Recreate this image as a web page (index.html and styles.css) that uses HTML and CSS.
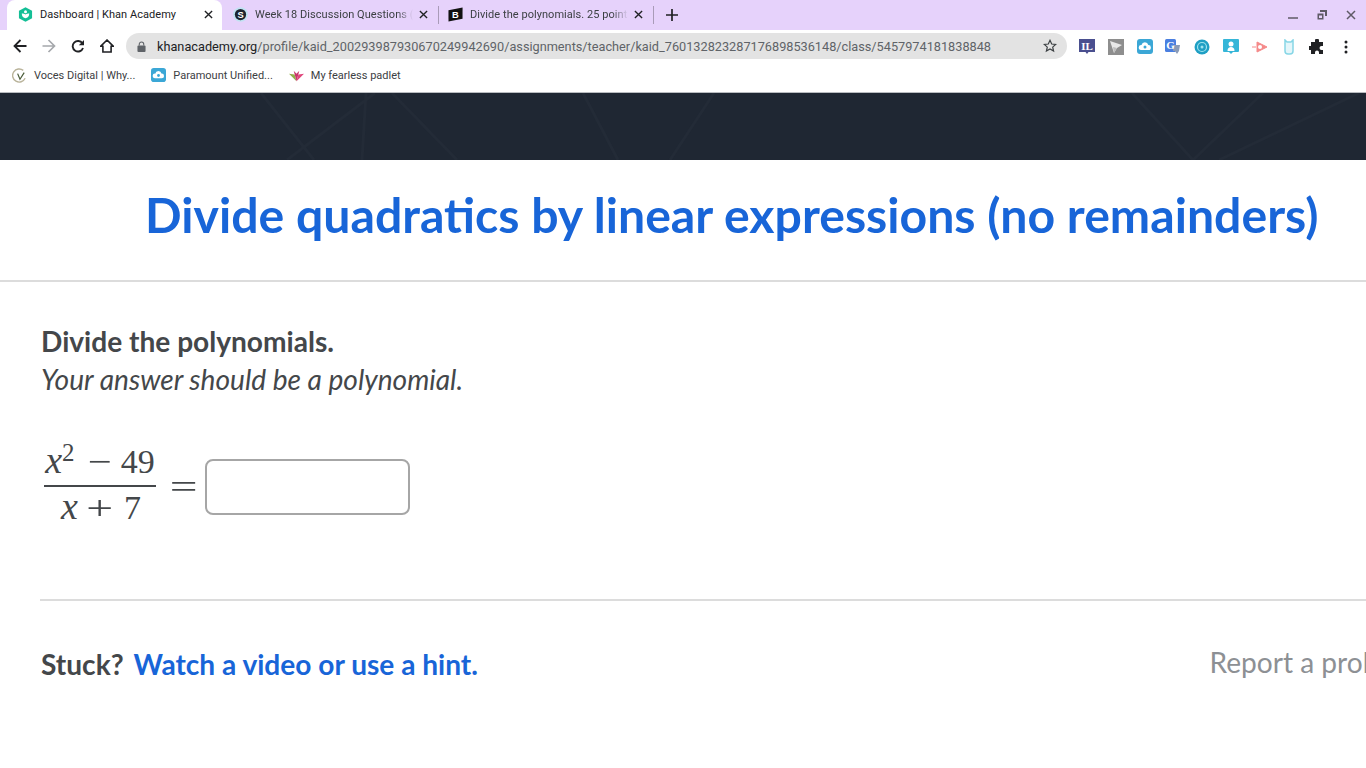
FILE: index.html
```html
<!DOCTYPE html>
<html lang="en">
<head>
    <meta charset="UTF-8">
    <title>Dashboard | Khan Academy</title>
    <link rel="stylesheet" href="styles.css">
</head>
<body>

    <!-- Browser chrome -->
    <div class="tab-strip">
        <div class="tab active">
            <svg class="favicon" viewBox="0 0 16 16"><path d="M8 .2l7 3.800v8l-7 3.800L1 12V4z" fill="#14bf96"/><path d="M4 7c0 3 2 5 4 5s4-2 4-5c-1.500 0-3 .3-4 1-1-.7-2.500-1-4-1z" fill="#fff"/><circle cx="8" cy="5" r="1.600" fill="#fff"/></svg>
            <span class="tab-title">Dashboard | Khan Academy</span>
            <svg class="tab-close" viewBox="0 0 10 10"><path d="M1 1l8 8M9 1l-8 8"/></svg>
        </div>
        <div class="tab">
            <svg class="favicon" viewBox="0 0 16 16"><circle cx="8" cy="8" r="7.800" fill="#bfe3f2"/><circle cx="8" cy="8" r="6" fill="#1d2430"/><text x="8" y="11.500" class="fav-letter">S</text></svg>
            <span class="tab-title fade">Week 18 Discussion Questions (Q</span>
            <svg class="tab-close" viewBox="0 0 10 10"><path d="M1 1l8 8M9 1l-8 8"/></svg>
        </div>
        <div class="tab-sep"></div>
        <div class="tab third">
            <svg class="favicon" viewBox="0 0 16 16"><path d="M.5 3.500l15-3v12l-15 3z" fill="#111"/><text x="8" y="11.500" class="fav-letter">B</text></svg>
            <span class="tab-title fade">Divide the polynomials. 25 points</span>
            <svg class="tab-close" viewBox="0 0 10 10"><path d="M1 1l8 8M9 1l-8 8"/></svg>
        </div>
        <div class="tab-sep"></div>
        <svg class="new-tab" viewBox="0 0 12 12"><path d="M6 0v12M0 6h12"/></svg>
        <div class="window-controls">
            <svg viewBox="0 0 10 10"><path d="M0 8h10" stroke="#5f5a66" stroke-width="1.500"/></svg>
            <svg viewBox="0 0 10 10"><path d="M3 0h7v6H8V2H3z" fill="#5f5a66"/><rect x="0.500" y="3.500" width="6" height="6" fill="#5f5a66"/><rect x="2" y="5.500" width="3" height="2.500" fill="#e6d2fb"/></svg>
            <svg viewBox="0 0 10 10"><path d="M1 1l8 8M9 1l-8 8" stroke="#5f5a66" stroke-width="1.500"/></svg>
        </div>
    </div>

    <div class="toolbar">
        <svg class="nav-icon" viewBox="0 0 14 14"><path d="M13.500 7H1.500M7.500 1L1.500 7l6 6" fill="none" stroke="#202124" stroke-width="1.800"/></svg>
        <svg class="nav-icon" viewBox="0 0 14 14"><path d="M.5 7h12M6.500 1l6 6-6 6" fill="none" stroke="#a5a8ac" stroke-width="1.700"/></svg>
        <svg class="nav-icon" viewBox="0 0 14 14"><path d="M12 9a5.300 5.300 0 1 1-.6-4.700" fill="none" stroke="#202124" stroke-width="1.900"/><path d="M13 1v5.200H7.800z" fill="#202124"/></svg>
        <svg class="nav-icon" viewBox="0 0 14 14"><path d="M7 1L.8 7.200h2.100V13h8.200V7.200h2.100z" fill="none" stroke="#202124" stroke-width="1.600"/></svg>
        <div class="omnibox">
            <svg class="lock" viewBox="0 0 10 12"><rect x="0.500" y="5" width="9" height="7" rx="1" fill="#5f6368"/><path d="M2.500 5V3.500a2.500 2.500 0 0 1 5 0V5" fill="none" stroke="#5f6368" stroke-width="1.200"/></svg>
            <div class="url"><span class="host">khanacademy.org</span>/profile/kaid_200293987930670249942690/assignments/teacher/kaid_760132823287176898536148/class/5457974181838848</div>
            <svg class="star" viewBox="0 0 14 14"><path d="M7 1.300l1.700 3.700 4 .4-3 2.700.9 4L7 10l-3.600 2.100.9-4-3-2.700 4-.4z" fill="none" stroke="#3c4043" stroke-width="1.200"/></svg>
        </div>
        <div class="extensions">
            <svg viewBox="0 0 16 16"><path d="M0 0h16v13H9.500L8 15l-1.500-2H0z" fill="#4a4f8f"/><text x="8" y="11" class="ext-letter">IL</text></svg>
            <svg viewBox="0 0 16 16"><rect width="16" height="16" fill="#8e8e8e"/><path d="M2 2l12 4-5 3-3 5z" fill="#e8e8e8"/><path d="M6 14l3-5-4-1z" fill="#bdbdbd"/></svg>
            <svg viewBox="0 0 16 16"><rect width="16" height="15" rx="3" fill="#3ba7d6"/><path d="M4 11a2.500 2.500 0 0 1 .5-5 3.500 3.500 0 0 1 6.800 0 2.500 2.500 0 0 1 .2 5z" fill="#fff"/><circle cx="8" cy="8" r="1.500" fill="#3ba7d6"/></svg>
            <svg viewBox="0 0 16 16"><rect width="11" height="13" rx="1.500" fill="#4a7fe0"/><path d="M8 6h7l-1 6-2 3-2-3H8z" fill="#8a9bb8"/><text x="5.500" y="9.500" class="ext-letter">G</text></svg>
            <svg viewBox="0 0 16 16"><circle cx="8" cy="8" r="7.500" fill="#1f9fc4"/><circle cx="8" cy="8" r="4.500" fill="none" stroke="#9fe3ee" stroke-width="1.200"/><circle cx="8" cy="8" r="1.500" fill="#9fe3ee"/></svg>
            <svg viewBox="0 0 16 16"><path d="M1 0h14a1 1 0 0 1 1 1v11a1 1 0 0 1-1 1h-5l-2 2-2-2H1a1 1 0 0 1-1-1V1a1 1 0 0 1 1-1z" fill="#35b6d8"/><circle cx="8" cy="5" r="2.500" fill="#fff"/><path d="M4.500 12c0-3 1.500-4 3.500-4s3.500 1 3.500 4z" fill="#fff"/></svg>
            <svg viewBox="0 0 16 16"><path d="M0 8h4M5 3l10 5-10 5z" fill="#f58a8a" stroke="#f58a8a"/><circle cx="8" cy="8" r="2" fill="#fff"/></svg>
            <svg viewBox="0 0 16 16"><path d="M4 1l2 2h4l2-2v11a3 3 0 0 1-3 3H7a3 3 0 0 1-3-3z" fill="#e4f6fa" stroke="#86d6e6" stroke-width="1.500"/></svg>
            <svg viewBox="0 0 16 16"><path d="M6 1.500a2 2 0 0 1 4 0V3h4v4h-1.500a2 2 0 0 0 0 4H14v4h-4v-1.500a2 2 0 0 0-4 0V15H2v-4H.5a2 2 0 0 1 0-4H2V3h4z" fill="#202124"/></svg>
            <svg viewBox="0 0 16 16"><circle cx="8" cy="3" r="1.500" fill="#202124"/><circle cx="8" cy="8" r="1.500" fill="#202124"/><circle cx="8" cy="13" r="1.500" fill="#202124"/></svg>
        </div>
    </div>

    <div class="bookmarks">
        <div class="bookmark">
            <svg viewBox="0 0 16 16"><path d="M12 2.500A7 7 0 1 0 14 11" fill="none" stroke="#b9b39a" stroke-width="1.500"/><path d="M6 6l2.500 6L13 5" fill="none" stroke="#4b5d3a" stroke-width="1.300"/></svg>
            <span>Voces Digital | Why...</span>
        </div>
        <div class="bookmark">
            <svg viewBox="0 0 16 16"><rect width="16" height="15" rx="3" fill="#3ba7d6"/><path d="M4 11a2.500 2.500 0 0 1 .5-5 3.500 3.500 0 0 1 6.800 0 2.500 2.500 0 0 1 .2 5z" fill="#fff"/><circle cx="8" cy="8" r="1.500" fill="#3ba7d6"/></svg>
            <span>Paramount Unified...</span>
        </div>
        <div class="bookmark">
            <svg viewBox="0 0 16 16"><path d="M8 14L0 6l6 1z" fill="#8fb04a"/><path d="M8 14l8-8-6 1z" fill="#e0457b"/><path d="M8 14L5 3l3 3 3-3z" fill="#c9366b"/></svg>
            <span>My fearless padlet</span>
        </div>
    </div>

    <!-- Page -->
    <div class="page">
        <div class="hero">
            <svg class="hero-lines" viewBox="0 0 1366 67" preserveAspectRatio="none">
                <path d="M261 0l53 67M375 0l-88 67M392 0l65 67M366 0l-4 67M583 0l35 67M714 0l-44 67M1132 0l61 67M1263 0l-70 67M1359 0l-140 67"/>
            </svg>
        </div>
        <div class="title-bar">
            <h1 class="exercise-title">Divide quadratics by linear expressions (no remainders)</h1>
        </div>
        <div class="problem">
            <p class="prompt">Divide the polynomials.</p>
            <p class="hint-line">Your answer should be a polynomial.</p>
            <div class="equation">
                <div class="fraction">
                    <div class="numerator"><i>x</i><sup>2</sup><span class="op minus">−</span>49</div>
                    <div class="denominator"><i>x</i><span class="op plus">+</span>7</div>
                </div>
                <span class="equals">=</span>
                <input class="answer-box" type="text">
            </div>
        </div>
        <div class="footer-row">
            <span class="stuck">Stuck?</span>
            <a class="hint-link">Watch a video or use a hint.</a>
            <a class="report-link">Report a problem</a>
        </div>
    </div>

</body>
</html>
```

FILE: styles.css
```css
html, body {
    margin: 0;
    padding: 0;
    height: 768px;
    overflow: hidden;
    background: #fff;
}
body {
    width: 1366px;
    font-family: Lato, sans-serif;
}

/* --- Tab strip --- */
.tab-strip {
    height: 30px;
    background: #e6d2fb;
    display: flex;
    align-items: center;
    font-family: Roboto, sans-serif;
    font-size: 11px;
    color: #3c4043;
}
.tab {
    width: 216px;
    height: 30px;
    box-sizing: border-box;
    padding: 0 0 2px 11px;
    display: flex;
    align-items: center;
    flex-shrink: 0;
}
.tab.third { width: 214px; padding-left: 9px; }
.tab.active {
    width: 215px;
    margin-left: 7px;
    background: #fff;
    border-radius: 8px 8px 0 0;
    color: #202124;
}
.tab.active .tab-close { margin-right: 9px; }
.favicon { width: 15px; height: 15px; flex-shrink: 0; }
.fav-letter {
    font: bold 10px "Liberation Sans", sans-serif;
    fill: #fff;
    text-anchor: middle;
}
.tab-title {
    margin-left: 7px;
    min-width: 0;
    white-space: nowrap;
    overflow: hidden;
    flex-grow: 1;
    flex-basis: 0;
    letter-spacing: 0.05px;
}
.fade {
    -webkit-mask-image: linear-gradient(to right, #000 90%, transparent);
    mask-image: linear-gradient(to right, #000 90%, transparent);
}
.tab-close {
    width: 9px;
    height: 9px;
    margin: 0 10px 0 6px;
    flex-shrink: 0;
    stroke: #202124;
    stroke-width: 1.500;
    fill: none;
}
.tab-sep {
    width: 1px;
    height: 18px;
    background: #a99bb8;
    flex-shrink: 0;
}
.new-tab {
    width: 12px;
    height: 12px;
    margin-left: 12px;
    stroke: #202124;
    stroke-width: 1.700;
}
.window-controls {
    margin-left: auto;
    display: flex;
    gap: 19px;
    padding: 0 10px 0 0;
}
.window-controls svg { width: 10px; height: 10px; }

/* --- Toolbar --- */
.toolbar {
    height: 32px;
    background: #fff;
    display: flex;
    align-items: center;
    padding-left: 13px;
}
.nav-icon { width: 14px; height: 14px; margin-right: 15px; flex-shrink: 0; }
.omnibox {
    width: 941px;
    height: 26px;
    margin-left: -3px;
    background: #e3e3e3;
    border-radius: 13px;
    display: flex;
    align-items: center;
    box-sizing: border-box;
    padding: 0 10px 0 11px;
    flex-shrink: 0;
}
.lock { width: 9px; height: 11px; flex-shrink: 0; }
.url {
    margin-left: 11px;
    font-family: Roboto, sans-serif;
    font-size: 12.720px;
    color: #5f6368;
    white-space: nowrap;
    flex-grow: 1;
}
.host { color: #202124; }
.star { width: 14px; height: 14px; flex-shrink: 0; }
.extensions {
    display: flex;
    align-items: center;
    gap: 12.800px;
    margin: 1px 0 0 12px;
}
.extensions svg { width: 16px; height: 16px; }
.ext-letter {
    font: bold 11px "Liberation Serif", serif;
    fill: #fff;
    text-anchor: middle;
}

/* --- Bookmarks --- */
.bookmarks {
    height: 31px;
    box-sizing: border-box;
    background: #fff;
    border-bottom: 1px solid #b9bcc0;
    display: flex;
    align-items: center;
    padding: 0 0 4px 12px;
    gap: 16px;
    font-family: Roboto, sans-serif;
    font-size: 11px;
    color: #3c4043;
}
.bookmark { display: flex; align-items: center; gap: 7px; }
.bookmark svg { width: 15px; height: 15px; }

/* --- Page content --- */
.hero {
    height: 67px;
    background: #1f2733;
}
.hero-lines { display: block; width: 100%; height: 100%; }
.hero-lines path { stroke: #232b37; stroke-width: 3; fill: none; }

.title-bar {
    height: 122px;
    box-sizing: border-box;
    border-bottom: 2px solid #dcdcdc;
    padding-left: 145px;
    display: flex;
    align-items: center;
}
.exercise-title {
    margin: 0 0 12px;
    font-size: 48.200px;
    font-weight: 700;
    color: #1865d8;
    white-space: nowrap;
}
.problem {
    margin-left: 40px;
    padding: 40px 0 0 1px;
    height: 319px;
    box-sizing: border-box;
    border-bottom: 2px solid #dcdcdc;
    color: #44474a;
}
.prompt {
    margin: 0;
    font-size: 28.100px;
    font-weight: 700;
    line-height: 38px;
}
.hint-line {
    margin: 0;
    font-size: 28.100px;
    font-style: italic;
    line-height: 38px;
}

/* --- Equation --- */
.equation {
    display: flex;
    align-items: center;
    margin-top: 43px;
    font-family: "Liberation Serif", serif;
    font-size: 34px;
}
.fraction {
    display: flex;
    flex-direction: column;
    align-items: center;
    width: 112px;
    margin-left: 3px;
}
.numerator {
    width: 100%;
    text-align: center;
    border-bottom: 2px solid #44474a;
    line-height: 41px;
    height: 44px;
}
.numerator i, .denominator i { font-size: 38px; line-height: 0; }
.numerator sup { font-size: 25px; line-height: 0; margin-right: 3px; }
.denominator { line-height: 41px; height: 46px; padding-left: 2px; }
.op { display: inline-block; transform: scaleX(1.250); }
.minus { margin: 0 12px 0 12px; }
.plus { margin: 0 15px 0 12px; transform: scaleX(1.400); }
.equals {
    display: inline-block;
    margin: 0 12px 0 18px;
    transform: scaleX(1.450);
}
.answer-box {
    width: 205px;
    height: 56px;
    box-sizing: border-box;
    border: 2px solid #a6a6a6;
    border-radius: 8px;
    background: #fff;
    padding: 0;
    outline: none;
}

/* --- Footer row --- */
.footer-row {
    display: flex;
    align-items: center;
    padding: 46px 0 0 41px;
    font-size: 28.100px;
    white-space: nowrap;
}
.stuck { font-weight: 700; color: #44474a; }
.hint-link { margin-left: 10px; font-weight: 700; color: #1865d8; }
.report-link {
    margin: -4px 0 0 731.500px;
    flex-shrink: 0;
    color: #8d9094;
}
```
